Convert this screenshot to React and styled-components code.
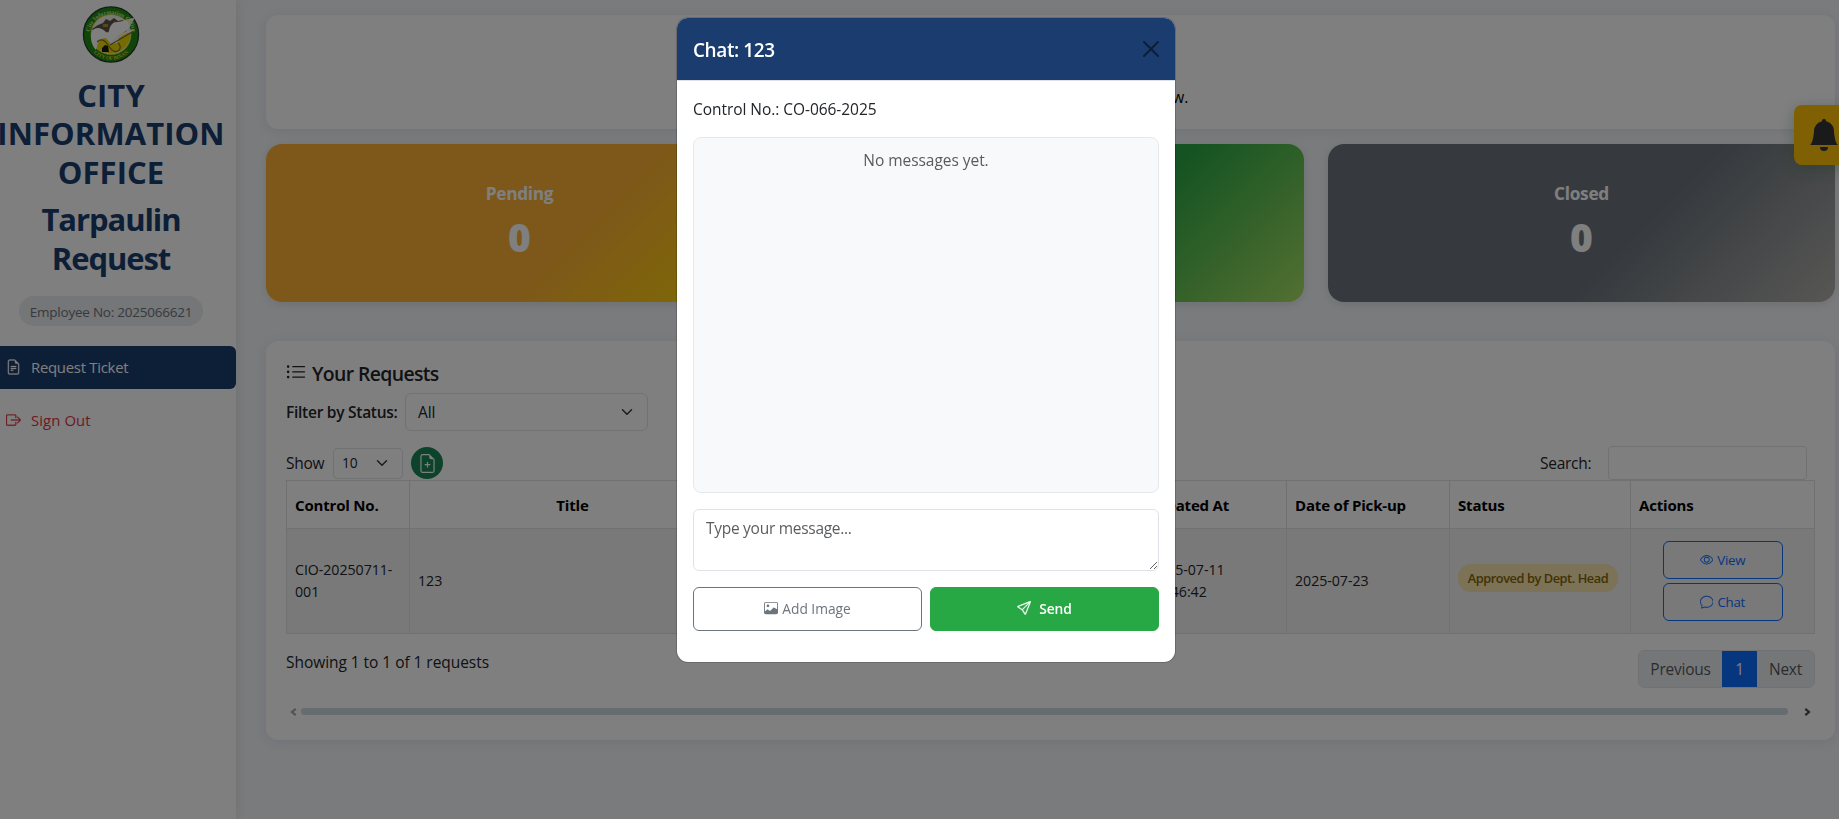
import React from "react";
import styled, { createGlobalStyle, css } from "styled-components";
import {
  BsBellFill,
  BsBoxArrowRight,
  BsChat,
  BsEye,
  BsFileEarmarkPlus,
  BsFileEarmarkText,
  BsImage,
  BsListUl,
  BsSend,
} from "react-icons/bs";

const GlobalStyle = createGlobalStyle`
  *, *::before, *::after { box-sizing: border-box; }
  body {
    margin: 0;
    overflow: hidden;
    background: #f4f6fa;
    color: #212529;
  }
  body, button, textarea, input {
    font-family: "Open Sans", "Noto Sans", sans-serif;
    letter-spacing: -0.003em;
  }
  h1, h2, h3, p { margin: 0; }
  svg { flex: none; }
`;

/* ---------- Page shell ---------- */
const Page = styled.div`
  display: flex;
  height: 819px;
  font-size: 15.5px;
  line-height: 24px;
`;

const Sidebar = styled.aside`
  flex: none;
  width: 250px;
  margin-left: -14px;
  padding-top: 5px;
  background: #fff;
  box-shadow: 2px 0 10px rgba(0, 0, 0, 0.07);
  display: flex;
  flex-direction: column;
  align-items: center;
`;

const SideTitle = styled.h1`
  width: 250px;
  margin-top: ${(p) => p.$gap}px;
  color: #1a3c6e;
  font-size: 31px;
  font-weight: 700;
  line-height: 38.4px;
  letter-spacing: ${(p) => p.$track};
  text-align: center;
  white-space: nowrap;
`;

const EmployeePill = styled.div`
  margin-top: 19px;
  height: 30px;
  width: 184px;
  border-radius: 15px;
  background: #e9ecef;
  color: #6c757d;
  font-size: 13.5px;
  line-height: 32px;
  letter-spacing: -0.017em;
  text-align: center;
  white-space: nowrap;
`;

const NavItem = styled.a`
  align-self: stretch;
  display: flex;
  align-items: center;
  gap: 10px;
  height: 43px;
  margin-top: ${(p) => p.$gap}px;
  padding: 0 0 1px 20px;
  border-radius: 6px;
  font-size: 14.9px;
  letter-spacing: ${(p) => (p.$active ? "-0.018em" : "0.005em")};
  color: #dc3545;
  svg { width: 15px; height: 16px; stroke: currentColor; stroke-width: 0.3; }
  ${(p) => p.$active && css`
    background: #1a3c6e;
    color: #fff;
  `}
`;

const Main = styled.main`
  flex: 1;
  min-width: 0;
  padding: 15px 4px 0 30px;
  display: flex;
  flex-direction: column;
`;

const Card = styled.section`
  background: #fff;
  border-radius: 12px;
  box-shadow: 0 2px 12px rgba(26, 60, 110, 0.1);
`;

const Welcome = styled(Card)`
  height: 114px;
  padding: 70px 0 0 875px;
  color: #000;
`;

const Stats = styled.div`
  display: grid;
  grid-template-columns: repeat(3, 1fr);
  gap: 24px;
  margin: 15px 0 39px;
`;

const Stat = styled.div`
  height: 158px;
  padding-top: 36px;
  border-radius: 16px;
  background: linear-gradient(135deg, ${(p) => p.$from} 60%, ${(p) => p.$to} 100%);
  box-shadow: 0 2px 8px rgba(0, 0, 0, 0.1);
  color: #fff;
  text-align: center;
`;

const StatLabel = styled.div`
  font-size: 17.3px;
  font-weight: 700;
  line-height: 27px;
  letter-spacing: -0.018em;
`;

const StatValue = styled.div`
  margin-top: 3px;
  font-size: 39px;
  font-weight: 800;
  line-height: 54px;
`;

/* ---------- Requests ---------- */
const Requests = styled(Card)`
  height: 399px;
  padding: 21px 20px 0;
`;

const Heading = styled.h2`
  display: flex;
  align-items: center;
  gap: 5px;
  font-size: 19.4px;
  font-weight: 600;
  line-height: 24px;
  letter-spacing: -0.032em;
  svg { width: 22px; height: 21px; margin: -4px 0 0 -1px; }
`;

const FilterRow = styled.div`
  display: flex;
  align-items: center;
  gap: 8px;
  margin-top: 7px;
`;

const Label = styled.label`
  width: ${(p) => p.$w}px;
  font-weight: ${(p) => p.$weight || 400};
  white-space: nowrap;
  letter-spacing: -0.017em;
`;

const Select = styled.div`
  display: flex;
  align-items: center;
  justify-content: space-between;
  width: ${(p) => p.$w}px;
  height: ${(p) => p.$h}px;
  padding: 0 ${(p) => p.$pr}px 0 ${(p) => p.$pl}px;
  border: 1px solid #dee2e6;
  border-radius: ${(p) => p.$r}px;
  font-size: ${(p) => p.$fs}px;
  svg { width: 12px; height: 12px; }
`;

const ToolRow = styled.div`
  display: flex;
  align-items: center;
  height: 34px;
  margin-top: 15px;
  padding-right: 8px;
`;

const AddButton = styled.button`
  display: grid;
  place-items: center;
  width: 32px;
  height: 32px;
  margin: 0 auto 0 8px;
  padding: 0;
  border: 0;
  border-radius: 50%;
  background: #198754;
  color: #fff;
  svg { width: 19px; height: 19px; }
`;

const SearchInput = styled.input`
  width: 199px;
  height: 34px;
  margin-left: 16px;
  border: 1px solid #dee2e6;
  border-radius: 4px;
`;

const Table = styled.table`
  width: 1528px;
  table-layout: fixed;
  border-collapse: collapse;
  th, td {
    border: 1px solid #dee2e6;
    padding: 0 8px;
    text-align: left;
    vertical-align: middle;
  }
  th {
    height: 48px;
    color: #000;
    font-size: 15px;
    font-weight: 700;
    letter-spacing: -0.012em;
  }
  td {
    height: 105px;
    background: #f2f2f2;
    font-size: 14.2px;
    line-height: 22px;
  }
  th.center { text-align: center; }
`;

const Badge = styled.span`
  display: block;
  width: 160px;
  height: 28px;
  margin-top: -6px;
  border-radius: 13px;
  background: #f6e4b0;
  color: #856404;
  font-size: 12.8px;
  font-weight: 600;
  line-height: 28px;
  letter-spacing: -0.035em;
  text-align: center;
  white-space: nowrap;
`;

const Actions = styled.div`
  display: flex;
  flex-direction: column;
  align-items: center;
  gap: 4px;
`;

const RowButton = styled.button`
  display: flex;
  align-items: center;
  justify-content: center;
  gap: 4px;
  width: 120px;
  height: 38px;
  border: 1px solid #0d6efd;
  border-radius: 6px;
  background: transparent;
  color: #0d6efd;
  font-size: 13.3px;
  letter-spacing: -0.018em;
  svg { width: 13.5px; height: 13.5px; }
`;

const TableFooter = styled.div`
  display: flex;
  justify-content: space-between;
  align-items: flex-start;
  margin-top: 16px;
`;

const Pagination = styled.div`
  display: flex;
  height: 38px;
  overflow: hidden;
  border: 1px solid #dee2e6;
  border-radius: 6px;
  letter-spacing: -0.016em;
`;

const PageLink = styled.span`
  width: ${(p) => p.$w}px;
  background: ${(p) => (p.$active ? "#0d6efd" : "#e9ecef")};
  color: ${(p) => (p.$active ? "#fff" : "rgba(33, 37, 41, 0.75)")};
  margin: ${(p) => (p.$active ? "-1px 0" : "0")};
  line-height: ${(p) => (p.$active ? 39 : 37)}px;
  text-align: center;
`;

const ScrollRow = styled.div`
  display: flex;
  align-items: center;
  height: 9px;
  margin-top: 19px;
  padding: 0 3px 0 4px;
  svg { width: 7px; height: 8px; }
`;

const Thumb = styled.div`
  width: 1487px;
  height: 7px;
  margin: 0 16px 0 4px;
  border-radius: 3px;
  background: #cddae2;
`;

const Bell = styled.button`
  position: fixed;
  top: 105px;
  right: -15px;
  width: 60px;
  height: 60px;
  padding: 0;
  display: grid;
  place-items: center;
  border: 0;
  border-radius: 8px;
  background: #ffc107;
  color: #343434;
  box-shadow: 0 4px 16px rgba(40, 110, 50, 0.3);
  svg { width: 32px; height: 32px; }
`;

/* ---------- Chat dialog ---------- */
const Backdrop = styled.div`
  position: fixed;
  inset: 0;
  display: flex;
  align-items: flex-start;
  padding: 17px 0 0 676px;
  background: rgba(0, 0, 0, 0.5);
`;

const Dialog = styled.div`
  width: 500px;
  height: 646px;
  overflow: hidden;
  border: 1px solid rgba(0, 0, 0, 0.175);
  border-radius: 12px;
  background: #fff;
  background-clip: padding-box;
  font-size: 15.5px;
  line-height: 24px;
`;

const DialogHeader = styled.header`
  display: flex;
  align-items: center;
  justify-content: space-between;
  height: 63px;
  padding: 0 16px;
  border-bottom: 1px solid #dee2e6;
  background: #1a3c6e;
  background-clip: padding-box;
  color: #fff;
  svg { width: 16px; height: 16px; color: #000; opacity: 0.5; }
`;

const DialogTitle = styled.h3`
  padding-top: 1px;
  font-size: 19px;
  font-weight: 600;
  letter-spacing: -0.022em;
`;

const DialogBody = styled.div`
  display: flex;
  flex-direction: column;
  gap: 16px;
  padding: 16px;
`;

const Messages = styled.div`
  height: 356px;
  padding-top: 10px;
  border: 1px solid #e6e9ec;
  border-radius: 8px;
  background: #f8f9fb;
  color: rgba(33, 37, 41, 0.75);
  text-align: center;
`;

const MessageInput = styled.textarea`
  display: block;
  width: 100%;
  height: 62px;
  padding: 6px 12px;
  border: 1px solid #dee2e6;
  border-radius: 6px;
  font-size: 15.5px;
  line-height: 24px;
  letter-spacing: -0.018em;
  resize: vertical;
  &::placeholder { color: rgba(33, 37, 41, 0.75); }
`;

const ButtonRow = styled.div`
  display: grid;
  grid-template-columns: 1fr 1fr;
  gap: 8px;
`;

const Button = styled.button`
  display: flex;
  align-items: center;
  justify-content: center;
  gap: ${(p) => (p.$primary ? 8 : 4)}px;
  height: 44px;
  padding-bottom: 3px;
  border: 1px solid ${(p) => (p.$primary ? "#28a745" : "#6c757d")};
  border-radius: 6px;
  background: ${(p) => (p.$primary ? "#28a745" : "#fff")};
  color: ${(p) => (p.$primary ? "#fff" : "#6c757d")};
  font-size: 13.8px;
  font-weight: ${(p) => (p.$primary ? 600 : 400)};
  svg {
    width: 14px;
    height: 14px;
    stroke: currentColor;
    stroke-width: ${(p) => (p.$primary ? 0.4 : 0)};
  }
`;

const Chevron = () => (
  <svg viewBox="0 0 16 16" fill="none" stroke="#343a40" strokeWidth="2" strokeLinecap="round" strokeLinejoin="round">
    <path d="m2 5 6 6 6-6" />
  </svg>
);

const CloseIcon = () => (
  <svg viewBox="0 0 16 16" fill="currentColor">
    <path d="M.293.293a1 1 0 0 1 1.414 0L8 6.586 14.293.293a1 1 0 1 1 1.414 1.414L9.414 8l6.293 6.293a1 1 0 0 1-1.414 1.414L8 9.414l-6.293 6.293a1 1 0 0 1-1.414-1.414L6.586 8 .293 1.707a1 1 0 0 1 0-1.414z" />
  </svg>
);

const ScrollArrow = ({ flip, color }) => (
  <svg viewBox="0 0 7 8" fill="none" stroke={color} strokeWidth="2.2" transform={flip ? "scale(-1 1)" : undefined}>
    <path d="M1.3.8 5 4 1.3 7.2" />
  </svg>
);

/* City seal: green ring, yellow field, white dove carrying a quill */
const Seal = () => (
  <svg width="60" height="60" viewBox="0 0 60 60">
    <defs>
      <path id="sealTop" d="M8.2 31a21.8 21.8 0 0 1 43.6 0" />
      <path id="sealBottom" d="M5.2 30a24.8 24.8 0 0 0 49.6 0" />
    </defs>
    <circle cx="30" cy="29.5" r="27.6" fill="#1f8a10" stroke="#24352a" strokeWidth="1.2" />
    <circle cx="30" cy="29.5" r="20" fill="#f0eee4" stroke="#d5d540" strokeWidth="0.8" />
    <path d="M14 41A20 20 0 0 0 49.5 28L36 24 22 32Z" fill="#e8d800" />
    <path d="M17 20l5-2 3-4 4 2 4-3 4 3 5-1 5 6-2 6-10 2-12-2-9 1-3-4z" fill="#5c5347" />
    <path d="M22 19h5v3h-5zM33 16l5 3-4 2z" fill="#b08d3c" />
    <path d="M21 43l3-3 3 1 1 6h-7z" fill="#161616" />
    <path d="M11 26c3-4 9-4 14 1 1 1 2 1 3-1 1-6 4-9 8-9 5 0 10-4 18-4-3 3-4 9-9 13l-8 5c1 3 1 5-1 7l-6 1-5-6c-4 0-6 2-8 5-1 2-1 5-2 7-5-5-6-13-4-19z" fill="#fff" />
    <path d="M53 25C45 26 38 31 30 38" fill="none" stroke="#f4f4f4" strokeWidth="2" />
    <path d="M53 26 29 40M16 37c4-4 8-2 11 3s6 8 10 6c3-2 3-6 0-8" fill="none" stroke="#86662a" strokeWidth="1.2" />
    <text fill="#d9e08a" fontSize="6" fontWeight="700" fontFamily="Liberation Serif, serif">
      <textPath href="#sealTop" startOffset="50%" textAnchor="middle">City Information Office</textPath>
    </text>
    <text fill="#d6cf2c" fontSize="5.2" fontWeight="700" fontFamily="Liberation Serif, serif">
      <textPath href="#sealBottom" startOffset="50%" textAnchor="middle">CITY OF BIÑAN</textPath>
    </text>
  </svg>
);

const columns = [123, 326, 407, 144, 163, 181, 184];

export default function App() {
  return (
    <>
      <GlobalStyle />
      <Page>
        <Sidebar>
          <Seal />
          <SideTitle $gap={11} $track="0.003em">CITY<br />INFORMATION<br />OFFICE</SideTitle>
          <SideTitle $gap={9} $track="-0.035em">Tarpaulin<br />Request</SideTitle>
          <EmployeePill>Employee No: 2025066621</EmployeePill>
          <NavItem $active $gap={20}><BsFileEarmarkText />Request Ticket</NavItem>
          <NavItem $gap={10}><BsBoxArrowRight />Sign Out</NavItem>
        </Sidebar>
        <Main>
          <Welcome><p>below.</p></Welcome>
          <Stats>
            <Stat $from="#fbb034" $to="#ffdd00">
              <StatLabel>Pending</StatLabel>
              <StatValue>0</StatValue>
            </Stat>
            <Stat $from="#28a745" $to="#a8e063" />
            <Stat $from="#6c757d" $to="#b0aeaa">
              <StatLabel>Closed</StatLabel>
              <StatValue>0</StatValue>
            </Stat>
          </Stats>
          <Requests>
            <Heading><BsListUl />Your Requests</Heading>
            <FilterRow>
              <Label $w={111} $weight={600}>Filter by Status:</Label>
              <Select $w={243} $h={38} $pl={12} $pr={14} $r={6} $fs={15.5}>All<Chevron /></Select>
            </FilterRow>
            <ToolRow>
              <Label $w={47}>Show</Label>
              <Select $w={70} $h={31} $pl={8} $pr={14} $r={4} $fs={13.8}>10<Chevron /></Select>
              <AddButton><BsFileEarmarkPlus /></AddButton>
              <Label $w={52} $weight={500}>Search:</Label>
              <SearchInput />
            </ToolRow>
            <Table>
              <colgroup>
                {columns.map((w, i) => <col key={i} width={w} />)}
              </colgroup>
              <thead>
                <tr>
                  <th>Control No.</th>
                  <th className="center">Title</th>
                  <th />
                  <th>Created At</th>
                  <th>Date of Pick-up</th>
                  <th>Status</th>
                  <th>Actions</th>
                </tr>
              </thead>
              <tbody>
                <tr>
                  <td>CIO-20250711-<br />001</td>
                  <td>123</td>
                  <td />
                  <td>2025-07-11<br />09:46:42</td>
                  <td>2025-07-23</td>
                  <td><Badge>Approved by Dept. Head</Badge></td>
                  <td>
                    <Actions>
                      <RowButton><BsEye />View</RowButton>
                      <RowButton><BsChat />Chat</RowButton>
                    </Actions>
                  </td>
                </tr>
              </tbody>
            </Table>
            <TableFooter>
              <p>Showing 1 to 1 of 1 requests</p>
              <Pagination>
                <PageLink $w={83}>Previous</PageLink>
                <PageLink $w={35} $active>1</PageLink>
                <PageLink $w={57}>Next</PageLink>
              </Pagination>
            </TableFooter>
            <ScrollRow>
              <ScrollArrow flip color="#a6a6a6" />
              <Thumb />
              <ScrollArrow color="#505050" />
            </ScrollRow>
          </Requests>
        </Main>
      </Page>
      <Bell><BsBellFill /></Bell>
      <Backdrop>
        <Dialog role="dialog">
          <DialogHeader>
            <DialogTitle>Chat: 123</DialogTitle>
            <CloseIcon />
          </DialogHeader>
          <DialogBody>
            <p>Control No.: CO-066-2025</p>
            <Messages>No messages yet.</Messages>
            <MessageInput placeholder="Type your message..." />
            <ButtonRow>
              <Button><BsImage />Add Image</Button>
              <Button $primary><BsSend />Send</Button>
            </ButtonRow>
          </DialogBody>
        </Dialog>
      </Backdrop>
    </>
  );
}
